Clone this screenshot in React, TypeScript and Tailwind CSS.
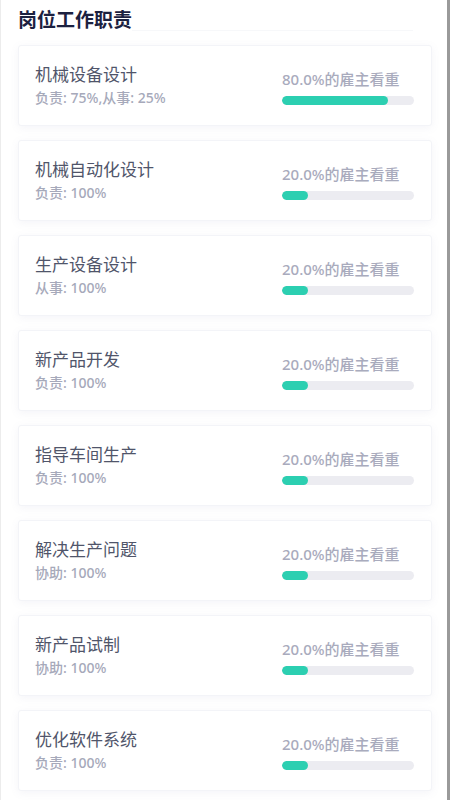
import React from 'react';

const duties = [
  { name: '机械设备设计', role: '负责: 75%,从事: 25%', pct: 80 },
  { name: '机械自动化设计', role: '负责: 100%', pct: 20 },
  { name: '生产设备设计', role: '从事: 100%', pct: 20 },
  { name: '新产品开发', role: '负责: 100%', pct: 20 },
  { name: '指导车间生产', role: '负责: 100%', pct: 20 },
  { name: '解决生产问题', role: '协助: 100%', pct: 20 },
  { name: '新产品试制', role: '协助: 100%', pct: 20 },
  { name: '优化软件系统', role: '负责: 100%', pct: 20 },
];

const App = () => {
  return (
    <div
      className="w-[450px] h-[800px] overflow-hidden bg-white border-l border-l-[#ececec] border-r-[3px] border-r-[#9a9a9a]"
      style={{ fontFamily: '"Noto Sans", "Noto Sans CJK SC", sans-serif' }}
    >
      <div className="flex items-end pl-[17px] pr-[34px] pt-[8px]">
        <h2 className="text-[19px] leading-[24px] font-bold text-[#1c2140]">岗位工作职责</h2>
        <div className="flex-1 h-px bg-[#f7f8fa] mb-[1px]" />
      </div>

      <div className="flex flex-col gap-[14px] pl-[17px] pr-[15px] mt-[13px]">
        {duties.map((d, i) => (
          <div
            key={i}
            className="h-[81px] flex items-center justify-between pl-[16px] pr-[17px] bg-white rounded-[3px] border border-[#f3f4f8] shadow-[0_2px_8px_rgba(110,120,170,0.08)]"
          >
            <div className="flex flex-col">
              <p className="text-[17px] leading-[22px] text-[#50556a]">{d.name}</p>
              <p className="text-[14px] leading-[18px] mt-[3px] font-medium text-[#a6a9ba]">{d.role}</p>
            </div>
            <div className="w-[132px] flex flex-col gap-[8px] mt-[4px]">
              <p className="text-[15px] leading-[18px] font-medium text-[#a9abbd] whitespace-nowrap">{d.pct.toFixed(1)}%的雇主看重</p>
              <div className="h-[9px] w-full rounded-full bg-[#ececf1] overflow-hidden">
                <div className="h-full rounded-full bg-[#2ccfb1]" style={{ width: `${d.pct}%` }} />
              </div>
            </div>
          </div>
        ))}
      </div>
    </div>
  );
};

export default App;
